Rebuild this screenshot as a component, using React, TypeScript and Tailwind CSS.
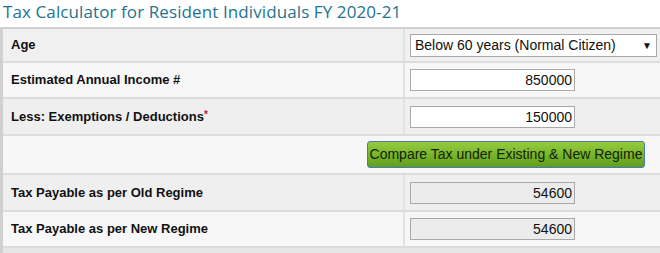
import { ReactNode } from 'react';

function Row({ label, bg, h, children }: { label?: ReactNode; bg: string; h: string; children?: ReactNode }) {
  return (
    <div className={`flex ${h} ${bg} border-b-2 border-[#dcdcdc]`}>
      <div className="w-[402px] shrink-0 flex items-center pl-[8px] border-r-2 border-[#e2e2e2] font-bold text-[13px] text-[#111]">
        {label}
      </div>
      <div className="flex-1 flex items-center pl-[5px]">{children}</div>
    </div>
  );
}

function NumBox({ value, readOnly }: { value: string; readOnly?: boolean }) {
  return (
    <input
      readOnly
      value={value}
      className={`w-[165px] h-[22px] border border-[#a9a9a9] text-right pr-[2px] text-[14px] text-[#111] outline-none ${readOnly ? 'bg-[#ececec]' : 'bg-white'}`}
      style={{ fontFamily: '"Liberation Sans", Arial, sans-serif' }}
    />
  );
}

export default function App() {
  return (
    <div className="w-[660px] h-[253px] overflow-hidden bg-white" style={{ fontFamily: '"Liberation Sans", Arial, sans-serif' }}>
      <h2 className="h-[27px] pl-[3px] pt-[2px] text-[17px] leading-[20px] text-[#23738f] tracking-[0.1px]" style={{ fontFamily: '"Open Sans", sans-serif' }}>
        Tax Calculator for Resident Individuals FY 2020-21
      </h2>
      <div className="border-l-[3px] border-t-2 border-[#d0d0d0] bg-[#e6e6e6] h-[226px]">
        <Row label="Age" bg="bg-[#f0f0f0]" h="h-[34px]">
          <div className="w-[247px] h-[23px] bg-white border border-[#a9a9a9] flex items-center justify-between pl-[4px] pr-[4px] text-[14px] text-[#111]">
            <span>Below 60 years (Normal Citizen)</span>
            <span className="text-[10px]">▼</span>
          </div>
        </Row>
        <Row label="Estimated Annual Income #" bg="bg-[#f7f7f7]" h="h-[36px]">
          <NumBox value="850000" />
        </Row>
        <Row
          label={<span>Less: Exemptions / Deductions<span className="text-[#c0153a] text-[10px] align-top">*</span></span>}
          bg="bg-[#efefef]"
          h="h-[37px]"
        >
          <NumBox value="150000" />
        </Row>
        <div className="flex h-[39px] bg-[#f7f7f7] border-b-2 border-[#dcdcdc] items-center justify-end pr-[15px]">
          <button className="h-[27px] w-[278px] rounded-[3px] border border-[#4d78b0] bg-gradient-to-b from-[#94cc3c] to-[#5f9e1e] text-[14px] text-[#132200]">
            Compare Tax under Existing &amp; New Regime
          </button>
        </div>
        <Row label="Tax Payable as per Old Regime" bg="bg-[#efefef]" h="h-[37px]">
          <NumBox value="54600" readOnly />
        </Row>
        <Row label="Tax Payable as per New Regime" bg="bg-[#f7f7f7]" h="h-[36px]">
          <NumBox value="54600" readOnly />
        </Row>
      </div>
    </div>
  );
}
